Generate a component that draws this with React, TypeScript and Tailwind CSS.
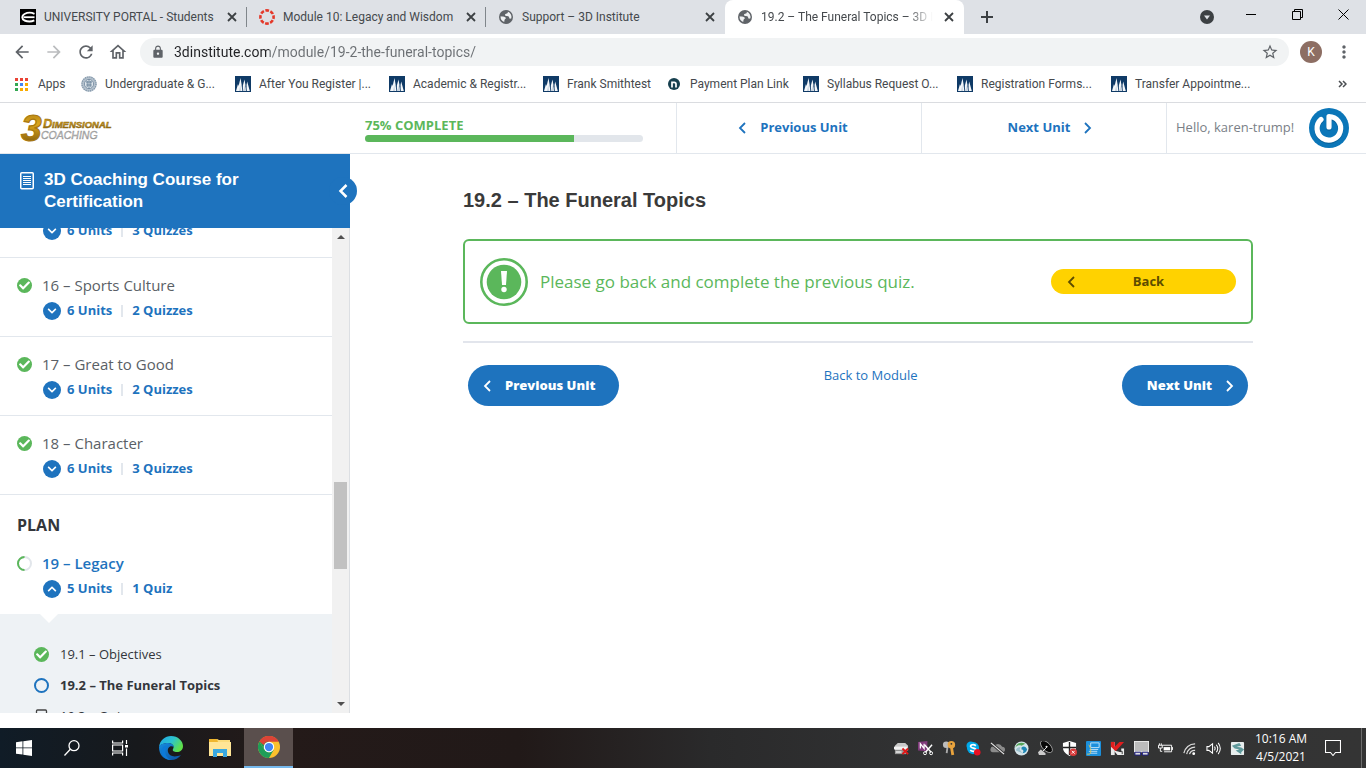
import React from "react";
import { FaCheck, FaChevronDown, FaChevronUp } from "react-icons/fa";
import { MdArrowBack, MdArrowForward, MdLock, MdMoreVert, MdOutlineHome, MdRefresh, MdStarOutline } from "react-icons/md";

const PeaksIcon = () => (
  <svg viewBox="0 0 16 16" className="size-4 shrink-0" aria-hidden="true">
    <rect width="16" height="16" fill="#0f3a66" />
    <path d="M1 15 L3 8 L3.6 10 L5.5 2 L7.2 12 L8 9 L9.5 3.5 L11 12 L12.2 5.5 L14.8 15 Z" fill="#f4f7fa" />
    <path d="M7.2 9.500 L7.800 15 M10.900 9.500 L11.400 15" stroke="#0f3a66" strokeWidth=".9" />
    <path d="M4 15 L5.300 9 L6 15 Z M8.600 15 L9.500 9 L10.200 15 Z" fill="#c9d4df" />
  </svg>
);

const SealIcon = () => (
  <svg viewBox="0 0 16 16" className="size-4 shrink-0" fill="none" aria-hidden="true">
    <circle cx="8" cy="8" r="7.8" fill="#b4c1cd" />
    <circle cx="8" cy="8" r="7" stroke="#8195a8" strokeWidth="1.2" strokeDasharray="1.2 1" />
    <circle cx="8" cy="8" r="4.6" fill="#dfe6ec" stroke="#71889d" strokeWidth=".8" />
    <path d="M8 3.6v9M5 6h6M5.5 9h5M6.2 5v6M9.8 5v6" stroke="#5f7b94" strokeWidth=".8" />
  </svg>
);

const AppsIcon = () => (
  <svg viewBox="0 0 13 13" className="size-[13px] shrink-0" aria-hidden="true">
    {["#ea4335", "#ea4335", "#ea4335", "#34a853", "#4285f4", "#f9ab00", "#34a853", "#f9ab00", "#f9ab00"].map((c, i) => (
      <rect key={i} x={(i % 3) * 5} y={Math.floor(i / 3) * 5} width="3" height="3" fill={c} />
    ))}
  </svg>
);

const NelnetIcon = () => (
  <svg viewBox="0 0 16 16" className="size-4 shrink-0" fill="none" aria-hidden="true">
    <circle cx="8" cy="8" r="6" fill="#17404f" />
    <path d="M6 11.500V6.300h2.200a1.800 1.800 0 0 1 1.800 1.800v3.400" stroke="#fff" strokeWidth="1.700" />
  </svg>
);

const PortalIcon = () => (
  <svg viewBox="0 0 16 16" className="size-4 shrink-0" fill="none" aria-hidden="true">
    <rect width="16" height="16" fill="#000" />
    <path d="M14.500 4.800C12 3.600 7.500 3.400 4.500 5C1.500 6.700 1.500 10 4.500 11.500C7.500 12.700 12 12.500 14.300 11.400" stroke="#fff" strokeWidth="1.900" />
    <path d="M3.500 8.200H14.500" stroke="#fff" strokeWidth="1.800" />
  </svg>
);

const CanvasIcon = () => (
  <svg viewBox="0 0 16 16" className="size-4 shrink-0" fill="none" aria-hidden="true">
    <circle cx="8" cy="8" r="6.600" stroke="#e4392b" strokeWidth="2.600" strokeDasharray="3.700 1.480" strokeDashoffset="1.850" />
  </svg>
);

const GlobeIcon = () => (
  <svg viewBox="0 0 16 16" className="size-4 shrink-0" aria-hidden="true">
    <circle cx="8" cy="8" r="7" fill="#5f6368" />
    <path d="M9.800 2.700c.3 1.300-.5 1.900-1.700 2-1 .1-1.200.7-1.100 1.500.1.600.9.700 2 .7 1.600 0 2.200.8 2.200 1.900 0 .9.700 1.100 2 .8A5.500 5.500 0 0 0 9.800 2.700z" fill="#eef0f2" />
    <path d="M2.600 7.300c1.500.3 3.400.2 4.600.9 1 .6.700 1.500-.1 1.900-.7.400-.5 1.300-.9 2.900A5.500 5.500 0 0 1 2.600 7.300z" fill="#eef0f2" />
  </svg>
);

const CloseIcon = () => (
  <svg viewBox="0 0 16 16" className="size-4" stroke="#3c4043" strokeWidth="1.800" aria-hidden="true">
    <path d="M4 4l8 8M12 4l-8 8" />
  </svg>
);

const tabs = [
  { title: "UNIVERSITY PORTAL - Students", icon: <PortalIcon /> },
  { title: "Module 10: Legacy and Wisdom", icon: <CanvasIcon /> },
  { title: "Support – 3D Institute", icon: <GlobeIcon /> },
  { title: "19.2 – The Funeral Topics – 3D Institute", icon: <GlobeIcon />, active: true },
];

function TabStrip() {
  return (
    <div className="flex h-[34px] shrink-0 bg-[#dee1e6] pl-2">
      {tabs.map((t, i) => (
        <div
          key={t.title}
          className={`flex w-[239px] shrink-0 items-center gap-2 pr-[7px] pl-3 ${t.active ? "rounded-t-lg bg-white" : ""} ${i < 2 ? "bg-[linear-gradient(#80868b,#80868b)] bg-[length:1px_20px] bg-[position:right_7px] bg-no-repeat" : ""}`}
        >
          {t.icon}
          <span
            className={`min-w-0 flex-1 overflow-hidden text-xs whitespace-nowrap text-[#45494d] ${t.active ? "[mask-image:linear-gradient(to_right,black_85%,transparent)]" : ""}`}
          >
            {t.title}
          </span>
          <button aria-label={`Close ${t.title}`}>
            <CloseIcon />
          </button>
        </div>
      ))}
      <button aria-label="New tab" className="ml-4 flex items-center">
        <svg viewBox="0 0 14 14" className="size-3.5" stroke="#3c4043" strokeWidth="2" aria-hidden="true">
          <path d="M7 1v12M1 7h12" />
        </svg>
      </button>
      <div className="ml-auto flex">
        <button aria-label="Search tabs" className="mr-3.5 flex items-center">
          <svg viewBox="0 0 14 14" className="size-3.5" aria-hidden="true">
            <circle cx="7" cy="7" r="7" fill="#3c4043" />
            <path d="M4 5.500h6L7 9.500z" fill="#dee1e6" />
          </svg>
        </button>
        <button aria-label="Minimize" className="flex h-7 w-[46px] items-center justify-center">
          <svg viewBox="0 0 11 11" className="size-[11px]" stroke="#000" aria-hidden="true"><path d="M0 5.500h10" /></svg>
        </button>
        <button aria-label="Restore" className="flex h-7 w-[46px] items-center justify-center">
          <svg viewBox="0 0 11 11" className="size-[11px]" stroke="#000" fill="none" aria-hidden="true">
            <path d="M.5 2.500h8v8h-8zM2.500 2.500v-2h8v8h-2" />
          </svg>
        </button>
        <button aria-label="Close" className="flex h-7 w-[46px] items-center justify-center">
          <svg viewBox="0 0 11 11" className="size-[11px]" stroke="#000" aria-hidden="true"><path d="M.5.5l10 10M10.500.5l-10 10" /></svg>
        </button>
      </div>
    </div>
  );
}

function Toolbar() {
  return (
    <div className="flex h-9 shrink-0 items-center bg-white pl-2">
      <div className="flex gap-1 text-[#5f6368]">
        <button aria-label="Back" className="flex size-7 items-center justify-center"><MdArrowBack className="size-5" /></button>
        <button aria-label="Forward" className="flex size-7 items-center justify-center text-[#babcbe]"><MdArrowForward className="size-5" /></button>
        <button aria-label="Reload" className="flex size-7 items-center justify-center"><MdRefresh className="size-5" /></button>
        <button aria-label="Home" className="flex size-7 items-center justify-center"><MdOutlineHome className="size-5" /></button>
      </div>
      <div className="ml-2 flex h-7 flex-1 items-center rounded-full bg-[#f1f3f4] pr-2.5 pl-[11px]">
        <MdLock className="size-3.5 text-[#5f6368]" />
        <input
          aria-label="Address"
          defaultValue="3dinstitute.com/module/19-2-the-funeral-topics/"
          className="ml-[9px] min-w-0 flex-1 bg-[linear-gradient(to_right,#202124_95px,#6b6f73_95px)] bg-clip-text text-sm text-transparent outline-none"
        />
        <button aria-label="Bookmark this tab"><MdStarOutline className="size-[18px] text-[#5f6368]" /></button>
      </div>
      <button className="ml-[11px] flex size-[22px] items-center justify-center rounded-full bg-[#8d6e63] text-xs text-white">K</button>
      <button aria-label="Menu" className="mr-3 ml-3 flex size-5 items-center justify-center text-[#5f6368]"><MdMoreVert className="size-5" /></button>
    </div>
  );
}

const bookmarks = [
  { label: "Undergraduate & G...", icon: <SealIcon />, width: "w-[154px]" },
  { label: "After You Register |...", icon: <PeaksIcon />, width: "w-[154px]" },
  { label: "Academic & Registr...", icon: <PeaksIcon />, width: "w-[154px]" },
  { label: "Frank Smithtest", icon: <PeaksIcon />, width: "w-[123px]" },
  { label: "Payment Plan Link", icon: <NelnetIcon />, width: "w-[137px]" },
  { label: "Syllabus Request O...", icon: <PeaksIcon />, width: "w-[154px]" },
  { label: "Registration Forms...", icon: <PeaksIcon />, width: "w-[154px]" },
  { label: "Transfer Appointme...", icon: <PeaksIcon />, width: "w-[154px]" },
];

function BookmarksBar() {
  return (
    <div className="flex h-[33px] shrink-0 items-center border-b border-[#dadce0] bg-white pb-1 pl-[15px] text-xs text-[#45494d]">
      <a href="#apps" className="flex w-[66px] items-center gap-2.5"><AppsIcon />Apps</a>
      {bookmarks.map((b) => (
        <a key={b.label} href="#bookmark" className={`flex shrink-0 items-center gap-2 whitespace-nowrap ${b.width}`}>
          {b.icon}
          {b.label}
        </a>
      ))}
      <button aria-label="More bookmarks" className="mr-[19px] ml-auto">
        <svg viewBox="0 0 9 8" className="h-2 w-[9px]" fill="none" stroke="#4a4e52" strokeWidth="1.500" aria-hidden="true">
          <path d="M1 1l3 3-3 3M5 1l3 3-3 3" />
        </svg>
      </button>
    </div>
  );
}

const Logo = () => (
  <svg viewBox="0 0 94 32" className="h-8 w-[94px]" role="img" aria-label="3 Dimensional Coaching">
    <defs>
      <linearGradient id="gold" x1="0" y1="0" x2="0" y2="1">
        <stop offset="0" stopColor="#a87a12" />
        <stop offset=".4" stopColor="#dba51c" />
        <stop offset="1" stopColor="#6b4a0a" />
      </linearGradient>
      <linearGradient id="silver" x1="0" y1="0" x2="0" y2="1">
        <stop offset="0" stopColor="#8e8e8e" />
        <stop offset=".5" stopColor="#c4c4c4" />
        <stop offset="1" stopColor="#777" />
      </linearGradient>
    </defs>
    <g fontFamily="Liberation Sans, sans-serif" fontStyle="italic">
      <text x="1" y="30" fontSize="37" fontWeight="700" fill="url(#gold)" stroke="#a9780f" strokeWidth="1.200">3</text>
      <text x="23" y="17" fontSize="13" fontWeight="700" fill="url(#gold)" stroke="#8f6a12" strokeWidth=".4">D</text>
      <text x="32" y="17" fontSize="9.500" fontWeight="700" fill="url(#gold)" stroke="#8f6a12" strokeWidth=".5">IMENSIONAL</text>
      <text x="21" y="28" fontSize="10.500" fill="url(#silver)" stroke="#9a9a9a" strokeWidth=".4">COACHING</text>
    </g>
  </svg>
);

const Chevron = ({ dir, className = "" }: { dir: "left" | "right"; className?: string }) => (
  <svg viewBox="0 0 8 12" className={`h-3 w-2 ${className}`} fill="none" stroke="currentColor" strokeWidth="1.800" aria-hidden="true">
    <path d={dir === "left" ? "M7 1L2 6l5 5" : "M1 1l5 5-5 5"} />
  </svg>
);

const PowerAvatar = () => (
  <svg viewBox="0 0 40 40" className="size-10" fill="none" aria-hidden="true">
    <circle cx="20" cy="20" r="20" fill="#0b76b8" />
    <path d="M12 12.500A11.800 11.800 0 1 0 20 9.500V20" stroke="#09568a" strokeWidth="5.500" strokeLinecap="round" strokeLinejoin="round" opacity=".6" />
    <path d="M12 11.500A11.800 11.800 0 1 0 20 8.500V19" stroke="#fff" strokeWidth="5.200" strokeLinecap="round" strokeLinejoin="round" />
  </svg>
);

function CourseHeader() {
  return (
    <header className="flex h-[51px] shrink-0 border-b border-[#e2e7ed] bg-white">
      <div className="w-[350px] pt-2 pl-5"><Logo /></div>
      <div className="flex flex-1 flex-col justify-center border-r border-[#e2e7ed] pr-[33px] pl-[15px]">
        <div className="text-[13px] leading-5 font-bold text-[#5bb75b]">75% COMPLETE</div>
        <div className="h-[7px] overflow-hidden rounded-full bg-[#e2e6eb]">
          <div className="h-full w-3/4 bg-[#5bb75b]" />
        </div>
      </div>
      <a href="#previous" className="flex w-[245px] items-center justify-center gap-3.5 border-r border-[#e2e7ed] pr-3 text-[13px] font-bold text-[#1e73be]">
        <Chevron dir="left" />Previous Unit
      </a>
      <a href="#next" className="flex w-[245px] items-center justify-center gap-3.5 border-r border-[#e2e7ed] pl-3 text-[13px] font-bold text-[#1e73be]">
        Next Unit<Chevron dir="right" />
      </a>
      <div className="flex w-[199px] items-center justify-between pr-[17px] pl-[9px] text-[13px] text-[#7a7f87]">
        Hello, karen-trump!
        <PowerAvatar />
      </div>
    </header>
  );
}

const DoneMark = () => (
  <span className="flex size-[15px] shrink-0 items-center justify-center rounded-full bg-[#5bb75b] text-white">
    <FaCheck className="size-[11px]" />
  </span>
);

function UnitRow({ units, quizzes, open = false }: { units: string; quizzes: string; open?: boolean }) {
  return (
    <button className="ml-[43px] flex h-5 items-center text-[13px] font-bold text-[#1e73be]" aria-expanded={open}>
      <span className="mr-1.5 flex size-[18px] items-center justify-center rounded-full bg-[#1e73be] text-white">
        {open ? <FaChevronUp className="size-2.5" /> : <FaChevronDown className="size-2.5" />}
      </span>
      {units}
      <span className="mx-[9px] h-3 w-0.5 bg-[#e2e7ed]" />
      {quizzes}
    </button>
  );
}

const modules = [
  { title: "16 – Sports Culture", units: "6 Units", quizzes: "2 Quizzes" },
  { title: "17 – Great to Good", units: "6 Units", quizzes: "2 Quizzes" },
  { title: "18 – Character", units: "6 Units", quizzes: "3 Quizzes" },
];

function Sidebar() {
  return (
    <aside className="flex w-[350px] shrink-0 flex-col">
      <div className="relative flex h-[74px] shrink-0 gap-2.5 bg-[#1e73be] pt-[15px] pl-5 text-white">
        <svg viewBox="0 0 14 18" className="mt-[3px] h-[18px] w-3.5" fill="none" stroke="#fff" aria-hidden="true">
          <rect x=".75" y=".75" width="12.500" height="16" rx="1" strokeWidth="1.500" />
          <path d="M3 4.500h8M3 6.500h8M3 8.500h8M3 10.500h8M3 12.500h8" />
        </svg>
        <h2 className="w-[220px] font-['Liberation_Sans',sans-serif] text-[17px] leading-[22px] font-bold">3D Coaching Course for Certification</h2>
        <button aria-label="Collapse sidebar" className="absolute top-[23px] -right-[7px] flex size-7 items-center justify-center rounded-full bg-[#1e73be]">
          <svg viewBox="0 0 10 16" className="h-4 w-2.5" fill="none" stroke="#fff" strokeWidth="2.500" aria-hidden="true"><path d="M8.500 2L2.500 8l6 6" /></svg>
        </button>
      </div>
      <div className="mb-[15px] flex min-h-0 flex-1 border-r border-[#dcdfe3]">
        <div className="min-w-0 flex-1 overflow-hidden">
          <div className="-mt-[7px] border-b border-[#e2e7ed] pb-4">
            <UnitRow units="6 Units" quizzes="3 Quizzes" />
          </div>
          {modules.map((m) => (
            <section key={m.title} className="border-b border-[#e2e7ed] pt-[15px] pb-[15px]">
              <a href="#module" className="mb-1 flex h-6 items-center gap-2.5 pl-[17px] text-[15px] text-[#5a5f66]"><DoneMark />{m.title}</a>
              <UnitRow units={m.units} quizzes={m.quizzes} />
            </section>
          ))}
          <h3 className="mt-[18px] pl-[17px] text-base leading-6 font-bold text-[#33363b]">PLAN</h3>
          <section className="pt-3.5 pb-[15px]">
            <a href="#module" className="mb-1 flex h-6 items-center gap-2.5 pl-[17px] text-[15px] font-semibold text-[#1e73be]">
              <svg viewBox="0 0 15 15" className="size-[15px]" fill="none" strokeWidth="2" aria-hidden="true">
                <circle cx="7.500" cy="7.500" r="6.500" stroke="#e2e6eb" />
                <path d="M7.500 14A6.500 6.500 0 0 1 7.500 1" stroke="#5bb75b" />
              </svg>
              19 – Legacy
            </a>
            <UnitRow units="5 Units" quizzes="1 Quiz" open />
          </section>
          <div className="bg-[#eef2f5] text-[13px] text-[#33363b]">
            <svg viewBox="0 0 18 9" className="ml-10 h-[9px] w-[18px]" aria-hidden="true"><path d="M0 0h18L9 9z" fill="#fff" /></svg>
            <ul className="pt-4 pl-[34px]">
              <li className="flex h-[31px] items-center gap-[11px]"><DoneMark /><a href="#unit">19.1 – Objectives</a></li>
              <li className="flex h-[31px] items-center gap-[11px] font-bold">
                <span className="size-[15px] rounded-full border-2 border-[#1e73be]" />
                <a href="#unit">19.2 – The Funeral Topics</a>
              </li>
              <li className="flex h-[31px] items-center gap-[11px]">
                <svg viewBox="0 0 15 15" className="size-[15px]" fill="none" stroke="#444" aria-hidden="true">
                  <rect x="2.500" y="1" width="10" height="12" rx="1" strokeWidth="1.300" />
                  <path d="M5.500 4.500h4" />
                </svg>
                <a href="#unit">19.3 – Quiz</a>
              </li>
            </ul>
          </div>
        </div>
        <div className="flex w-[17px] flex-col items-center bg-[#f1f1f1] py-[5px]" aria-hidden="true">
          <svg viewBox="0 0 8 8" className="size-2" fill="#505050"><path d="M0 6h8L4 2z" /></svg>
          <div className="grow-[241]" />
          <div className="h-[87px] w-[13px] bg-[#c1c1c1]" />
          <div className="grow-[131]" />
          <svg viewBox="0 0 8 8" className="size-2" fill="#505050"><path d="M0 2h8L4 6z" /></svg>
        </div>
      </div>
    </aside>
  );
}

function Content() {
  return (
    <main className="min-w-0 flex-1 px-6 pt-8">
      <div className="mx-auto max-w-[790px]">
        <h1 className="font-['Liberation_Sans',sans-serif] text-xl leading-7 font-bold text-[#3a3a3a]">19.2 – The Funeral Topics</h1>
        <div className="mt-[25px] flex h-[85px] items-center rounded-md border-2 border-[#5bb75b] px-[15px]">
          <svg viewBox="0 0 48 48" className="size-12" aria-hidden="true">
            <circle cx="24" cy="24" r="22.700" fill="none" stroke="#5bb75b" strokeWidth="2.600" />
            <circle cx="24" cy="24" r="17.300" fill="#5bb75b" />
            <path d="M21 13h6l-1 14h-4z" fill="#fff" />
            <circle cx="24" cy="31.500" r="2.700" fill="#fff" />
          </svg>
          <p className="ml-3 flex-1 text-[17px] text-[#5bb75b]">Please go back and complete the previous quiz.</p>
          <button className="relative flex h-[25px] w-[185px] items-center justify-center rounded-full bg-[#ffd200] pl-2.5 text-[13px] font-bold text-[#5d4c00]">
            <Chevron dir="left" className="absolute left-4" />
            Back
          </button>
        </div>
        <hr className="mt-[17px] border-t-2 border-[#e2e5ec]" />
        <nav className="mt-[22px] flex items-start justify-between px-[5px] text-[13px] text-white">
          <a href="#previous" className="flex h-[41px] items-center gap-3.5 rounded-full bg-[#1e73be] pr-6 pl-[15px] font-extrabold"><Chevron dir="left" />Previous Unit</a>
          <a href="#module" className="leading-5 text-[#1e73be]">Back to Module</a>
          <a href="#next" className="flex h-[41px] items-center gap-3.5 rounded-full bg-[#1e73be] pr-[14px] pl-[25px] font-extrabold">Next Unit<Chevron dir="right" /></a>
        </nav>
      </div>
    </main>
  );
}

const trayIcons: { name: string; art: React.ReactNode }[] = [
  { name: "Drive", art: <><path d="M1 5l3-3h8l3 3v5H1z" fill="#c9c9c9" /><path d="M0 6h14v3H0z" fill="#f2f2f2" /><path d="M1 10h12v4H1z" fill="#999" /><path d="M2 11h6v1.500H2z" fill="#eee" /><path d="M9 8l6 6M15 8l-6 6" stroke="#e01818" strokeWidth="2" /></> },
  { name: "Clipper", art: <><path d="M0 1l10-1v11l-10-1z" fill="#80397b" /><path d="M2.500 8V3l4 5V3" stroke="#fff" strokeWidth="1.300" fill="none" /><path d="M7 4l7 8M15 4l-7 8" stroke="#fff" strokeWidth="1.500" /><circle cx="7.500" cy="13" r="1.600" stroke="#fff" fill="none" /><circle cx="14" cy="13" r="1.600" stroke="#fff" fill="none" /></> },
  { name: "Keys", art: <><path d="M6 5L5 13" stroke="#aaa" strokeWidth="2" /><circle cx="4.500" cy="4" r="3.500" fill="#bdbdbd" /><circle cx="10" cy="4" r="4" fill="#e8a33d" /><path d="M10 6l1.500 9" stroke="#e8a33d" strokeWidth="3" /><circle cx="10" cy="3" r="1" fill="#333" /></> },
  { name: "Skype", art: <><circle cx="5" cy="5" r="4.500" fill="#00a8e8" /><circle cx="7.500" cy="7.500" r="6.500" fill="#00a8e8" /><path d="M10.500 5C8 3 4.500 4 5 6S11 7.500 10.500 9.500 6.500 11.500 4.500 9.800" stroke="#fff" strokeWidth="1.900" fill="none" /><circle cx="12" cy="12" r="3.500" fill="#e81123" /></> },
  { name: "Cloud", art: <><path d="M3 12h10a3 3 0 0 0 0-6 5 5 0 0 0-9 0 3 3 0 0 0-1 6z" fill="#8b8b8b" /><path d="M1 2l14 12" stroke="#333" strokeWidth="3" /><path d="M1 2l14 12" stroke="#eee" strokeWidth="1.200" /></> },
  { name: "Sync", art: <><circle cx="8" cy="8" r="7.500" fill="#d5e5ea" /><path d="M8 7c2-2 5-1 6 2-1 3-3 4-5 4 2-2 1-4-1-4z" fill="#1e87b5" /><path d="M1.500 7C2 3 7 0 12 3L8 5C5 4 3 5 1.500 7z" fill="#57a55a" /><path d="M2 10c1-3 3-4 5-3l-1 2 3 4z" fill="#9cc2cf" /></> },
  { name: "Dish", art: <><ellipse cx="9" cy="6" rx="8" ry="4.200" transform="rotate(45 9 6)" fill="#080808" stroke="#bbb" strokeWidth=".8" /><path d="M10 6L5 11" stroke="#eee" /><circle cx="9" cy="6" r="1" fill="#eee" /><path d="M0 12l3-3 5 4v2H1z" fill="#ccc" /></> },
  { name: "Security", art: <><path d="M8 0l7 2v5c0 5-4 7-7 9-3-2-7-4-7-9V2z" fill="#fff" /><path d="M8 1v14M1 7h14" stroke="#222" strokeWidth="1.500" /><circle cx="12" cy="12" r="4" fill="#d83b3b" /><path d="M10.500 10.500l3 3M13.500 10.500l-3 3" stroke="#fff" /></> },
  { name: "Computer", art: <><rect width="16" height="16" rx="1" fill="#1b8fdb" /><path d="M5 2h9v5H5zM4 9h9M3 11h9M4 13h8" fill="none" stroke="#bfe3fa" strokeWidth="1" /><path d="M1 14h3c2-2 1-7-1-10" stroke="#d8c25c" fill="none" /></> },
  { name: "Antivirus", art: <><path d="M1 1h4v14H1z" fill="#e8e8e8" /><path d="M1 1h4v5l5-5h5L6 11 1 6z" fill="#e01e1e" /><path d="M4 10l4 5h7V8h-3v4z" fill="#eee" /><path d="M10 11h3v3" stroke="#333" fill="none" /></> },
  { name: "Display", art: <><rect x=".5" y=".5" width="15" height="11" fill="#bcbcbc" stroke="#eee" /><path d="M1 12h6v3H1zM9 12h6v3H9z" fill="#ddd" stroke="#20208a" /></> },
  { name: "Power", art: <><path d="M4.500 4.500h10v7h-8M15.500 6.500v3M.5 4.500v3h4v-3zM2.500 7.500v3.500h2M1.500 2.500v2M3.500 2.500v2" stroke="#fff" fill="none" /><path d="M6 6.500h7V10H6z" fill="#fff" /></> },
  { name: "Network", art: <><path d="M2 13A12 12 0 0 1 14 3M5 14A9 9 0 0 1 14 6.500M8 14A6 6 0 0 1 14 10" stroke="#ddd" fill="none" strokeWidth="1.300" /><circle cx="12.500" cy="13.500" r="1.500" fill="#fff" /></> },
  { name: "Volume", art: <path d="M1 6h2l4-3v10L3 10H1zM9 6q1.500 2 0 4M11 4q3 4 0 8M13 2q4.500 6 0 12" stroke="#fff" fill="none" strokeWidth="1.100" /> },
  { name: "Desktop tool", art: <><rect x="1" y="1" width="14" height="14" rx="1" fill="#e8eeee" /><path d="M10 2L2 5l3 3 5 1-4 1 6 4v-2l3-3-3-2-5-1 5-1z" fill="#5f9a9c" /></> },
];

function Taskbar() {
  return (
    <footer className="flex h-10 shrink-0 bg-[linear-gradient(to_right,#101c27_0%,#17191c_10%,#241a19_20%,#211918_38%,#2a2a2b_52%,#323334_70%,#343434_100%)]">
      <button aria-label="Start" className="flex w-12 items-center justify-center">
        <svg viewBox="0 0 16 16" className="size-4" fill="#fff" aria-hidden="true"><path d="M0 2.200l6.500-.9v6.200H0zM7.300 1.200L16 0v7.500H7.300zM0 8.300h6.500v6.300L0 13.700zM7.300 8.300H16V16l-8.700-1.200z" /></svg>
      </button>
      <button aria-label="Search" className="flex w-12 items-center justify-center">
        <svg viewBox="0 0 16 16" className="size-4" fill="none" stroke="#fff" strokeWidth="1.300" aria-hidden="true"><circle cx="10" cy="5.700" r="5" /><path d="M6.300 9.300L.5 15.500" /></svg>
      </button>
      <button aria-label="Task view" className="flex w-12 items-center justify-center">
        <svg viewBox="0 0 16 16" className="size-4" fill="none" stroke="#fff" strokeWidth="1.200" aria-hidden="true"><path d="M.6.500v2.500h10V.5M.6 15.500V13h10v2.500M.6 5h10v6H.6zM14.500 0v4M14.500 8.500V16" /><path d="M13 5h3v2.500h-3z" fill="#fff" stroke="none" /></svg>
      </button>
      <button aria-label="Edge" className="ml-0.5 flex w-[49px] items-center justify-center">
        <svg viewBox="0 0 24 24" className="size-6" aria-hidden="true">
          <defs>
            <linearGradient id="edgeTop" x1="0" y1="0" x2="1" y2=".5"><stop offset="0" stopColor="#1fa5e8" /><stop offset=".55" stopColor="#2cc3cf" /><stop offset="1" stopColor="#5fe04a" /></linearGradient>
            <linearGradient id="edgeLow" x1="0" y1="0" x2="1" y2="1"><stop offset="0" stopColor="#168de0" /><stop offset="1" stopColor="#0b4fa0" /></linearGradient>
          </defs>
          <path d="M0 11C1 4 6 0 12 0c7 0 12 5 12 10 0 4-3 6-6 6-3 0-5-1-4-3 2-3-1-6-5-6C5 7 1 9 0 11z" fill="url(#edgeTop)" />
          <path d="M0 11c1-3 5-4 9-4 3 0 5 1 6 4-4-2-7 1-6 5 1 4 6 6 13 3-2 3-6 5-10 5C5 24 0 19 0 11z" fill="url(#edgeLow)" />
          <path d="M9 10c-4 3-4 11 3 14C5 24 1 18 3 13c1-3 4-4 6-3z" fill="#0d7ad8" />
        </svg>
      </button>
      <button aria-label="File Explorer" className="flex w-[49px] items-center justify-center">
        <svg viewBox="0 0 22 20" className="h-5 w-[22px]" aria-hidden="true">
          <path d="M0 1h8l2 1h11v16H0z" fill="#fbdc7c" /><path d="M0 1h8l1 3H0z" fill="#efb62e" /><path d="M0 4h22v14H0z" fill="#ffe596" />
          <path d="M4 19v-8h14v8h-4v-4H8v4z" fill="#3aa8df" />
        </svg>
      </button>
      <button aria-label="Chrome" className="flex w-[49px] items-center justify-center border-b-2 border-[#76b9ed] bg-[#5a4f4d]">
        <svg viewBox="0 0 24 24" className="size-[22px]" aria-hidden="true">
          <circle cx="12" cy="12" r="12" fill="#fbc02d" />
          <path d="M12 12L1.600 6A12 12 0 0 1 22.400 6H12z" fill="#db4437" />
          <path d="M1.600 6A12 12 0 0 0 12 24l5.200-9L12 18 6.800 15z" fill="#1e9d58" />
          <path d="M1.600 6L7 15.500 12 12V6z" fill="#1e9d58" />
          <path d="M1.600 6A12 12 0 0 1 22.400 6H12A6 6 0 0 0 6.500 10z" fill="#db4437" />
          <circle cx="12" cy="12" r="5.700" fill="#fff" /><circle cx="12" cy="12" r="4.500" fill="#4285f4" />
        </svg>
      </button>
      <div className="ml-auto flex">
        {trayIcons.map((t) => (
          <button key={t.name} aria-label={t.name} className="flex w-6 items-center justify-center">
            <svg viewBox="0 0 16 16" className="size-[15px]" aria-hidden="true">{t.art}</svg>
          </button>
        ))}
      </div>
      <div className="flex w-[60px] flex-col items-center justify-center pl-1 text-xs leading-[18px] whitespace-nowrap text-white">
        <span>10:16 AM</span>
        <span>4/5/2021</span>
      </div>
      <button aria-label="Notifications" className="flex w-12 items-center justify-center">
        <svg viewBox="0 0 16 16" className="size-4" fill="none" stroke="#fff" strokeWidth="1.100" aria-hidden="true"><path d="M.5.500h15v12h-5L8 15.500 5.500 12.500h-5z" /></svg>
      </button>
      <div className="mr-1 ml-1 w-px bg-[#6c6c6c]" />
    </footer>
  );
}

export default function App() {
  return (
    <div className="flex h-screen flex-col overflow-hidden bg-white font-['Open_Sans',sans-serif]">
      <div className="shrink-0 font-[Roboto,sans-serif]">
        <TabStrip />
        <Toolbar />
        <BookmarksBar />
      </div>
      <CourseHeader />
      <div className="flex min-h-0 flex-1">
        <Sidebar />
        <Content />
      </div>
      <Taskbar />
    </div>
  );
}
